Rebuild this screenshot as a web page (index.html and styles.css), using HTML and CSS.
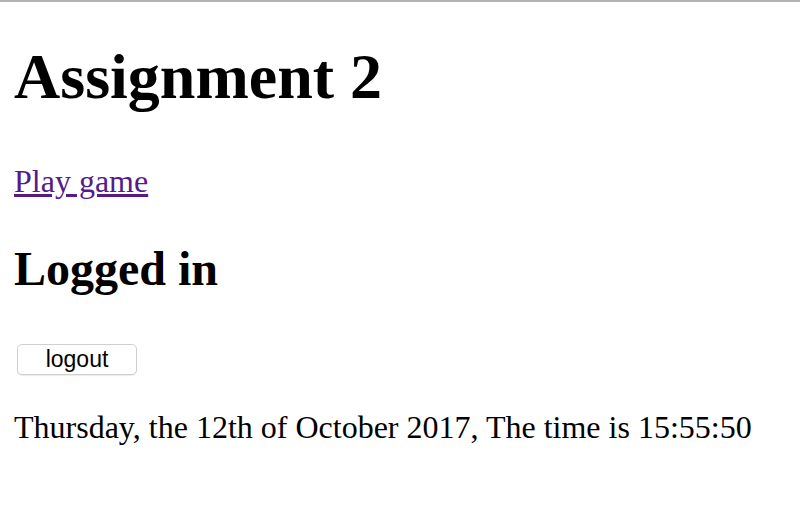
FILE: index.html
```html
<!DOCTYPE html>
<html>
<head>
<meta charset="utf-8">
<title>Assignment 2</title>
<link rel="stylesheet" href="styles.css">
</head>
<body class="page">
<h1 class="title">Assignment 2</h1>
<p class="link-row"><a class="play-link" href="#">Play game</a></p>
<h2 class="status">Logged in</h2>
<div class="actions"><button class="logout-btn" type="button">logout</button></div>
<p class="clock">Thursday, the 12th of October 2017, The time is 15:55:50</p>
</body>
</html>
```
FILE: styles.css
```css
html {
  margin: 0;
  padding: 0;
  background: #ffffff;
}
.page {
  margin: 0;
  padding: 0 14px;
  border-top: 2px solid #b3b3b3;
  font-family: "Liberation Serif", "Times New Roman", serif;
  color: #000;
}
.title {
  font-size: 64px;
  line-height: 74px;
  font-weight: bold;
  margin: 38px 0 49px;
}
.link-row {
  font-size: 32px;
  line-height: 37px;
  margin: 0 0 41px;
}
.play-link {
  color: #551a8b;
  text-decoration: underline;
}
.status {
  font-size: 48px;
  line-height: 55px;
  font-weight: bold;
  margin: 0 0 48px;
}
.actions {
  display: flex;
  margin: 0 0 34px 3px;
}
.logout-btn {
  width: 120px;
  height: 31px;
  padding: 0;
  background: #ffffff;
  border: 1px solid #cfcfcf;
  border-radius: 5px;
  box-shadow: 0 1px 1px rgba(0, 0, 0, 0.08);
  font-family: "Liberation Sans", Arial, sans-serif;
  font-size: 23px;
  line-height: 29px;
  color: #000;
}
.clock {
  font-size: 32px;
  line-height: 37px;
  margin: 0;
}
```
